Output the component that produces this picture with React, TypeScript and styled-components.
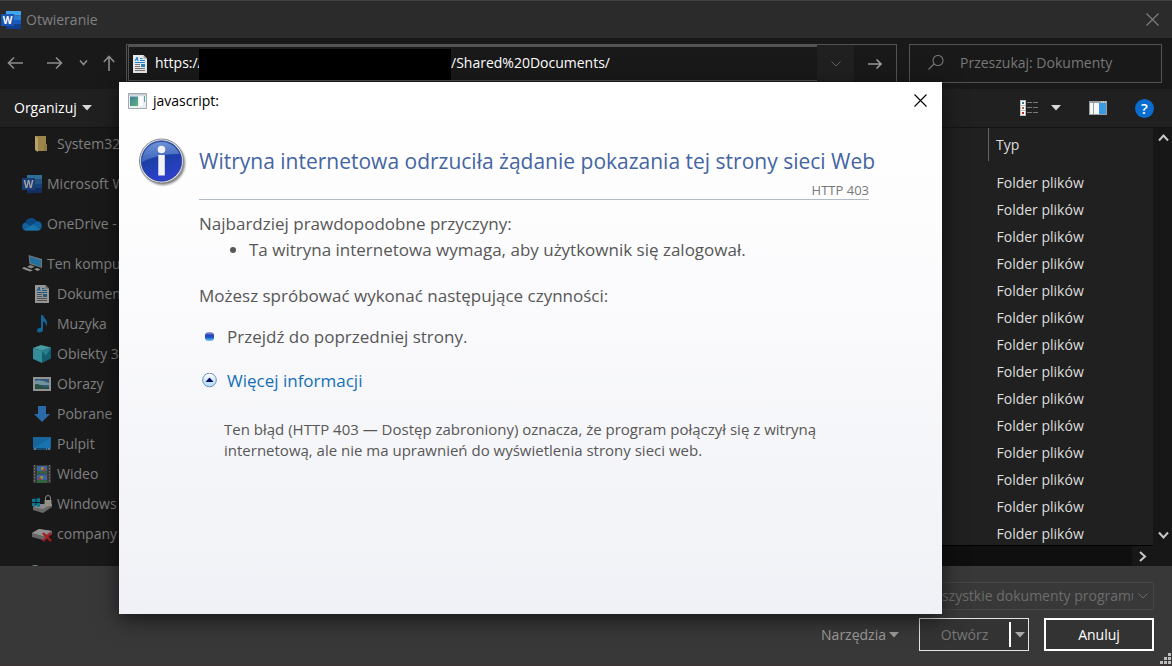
import React, { ReactNode } from 'react'
import styled, { createGlobalStyle } from 'styled-components'

const FONT = '"Segoe UI", "Open Sans", "Noto Sans", sans-serif'
const LINE = '#535353'

const GlobalStyle = createGlobalStyle`
  * {
    box-sizing: border-box;
  }

  body {
    margin: 0;
    background: #383838;
    font-family: ${FONT};
    font-size: 14px;
    line-height: 20px;
  }

  button,
  input,
  select {
    font: inherit;
    color: inherit;
    background: none;
    border: 0;
    border-radius: 0;
    padding: 0;
    margin: 0;
    outline: 0;
  }

  svg {
    display: block;
    flex: none;
  }
`

const Window = styled.div`
  position: relative;
  display: flex;
  flex-direction: column;
  height: 100vh;
  min-height: 640px;
  overflow: hidden;
  background: #191919;
  border-top: 1px solid #414141;
`

const TitleBar = styled.header`
  display: flex;
  align-items: center;
  gap: 5px;
  height: 37px;
  padding: 0 13px 0 1px;
  background: #2b2b2b;
  color: #808080;
`

const WindowTitle = styled.h1`
  flex: 1;
  margin: 0;
  font-size: 14px;
  font-weight: 400;
  line-height: 20px;
`

const IconButton = styled.button`
  display: flex;
  align-items: center;
  justify-content: center;
`

const AddressBar = styled.div`
  display: flex;
  align-items: center;
  gap: 12px;
  height: 51px;
  padding: 0 10px 0 7px;
`

const Nav = styled.nav`
  display: flex;
  align-items: center;
  gap: 15px;
  width: 109px;
  margin-right: -2px;
  padding-bottom: 2px;
  color: #8c8c8c;

  button:first-child {
    margin-right: 8px;
  }
`

const AddressBox = styled.div`
  display: flex;
  flex: 1;
  height: 39px;
  border: 1px solid ${LINE};
`

const AddressField = styled.div`
  display: flex;
  flex: 1;
  min-width: 0;
  margin: 0 0 1px 1px;
  border: 1px solid ${LINE};
  border-top-width: 2px;
  border-right: 0;
  padding-left: 4px;
  color: #fff;

  svg {
    align-self: center;
    margin-right: 8px;
  }
`

const AddressInput = styled.input<{ width?: number }>`
  width: ${props => (props.width ? `${props.width}px` : 'auto')};
  flex: ${props => (props.width ? 'none' : 1)};
  min-width: 0;
  padding-bottom: 2px;
`

const Redacted = styled.div`
  width: 252px;
  margin-top: 2px;
  background: #000;
`

const History = styled.button`
  display: flex;
  align-items: center;
  justify-content: center;
  width: 37px;
  background: #202020;
  color: #606060;
`

const GoButton = styled(IconButton)`
  width: 42px;
  color: #999;
`

const Search = styled.label`
  display: flex;
  align-items: center;
  gap: 16px;
  width: 253px;
  height: 39px;
  padding: 0 0 2px 18px;
  border: 1px solid ${LINE};
  color: #777;

  input {
    flex: 1;
    min-width: 0;
  }

  input::placeholder {
    color: #777;
    opacity: 1;
  }
`

const Toolbar = styled.div`
  display: flex;
  align-items: center;
  gap: 28px;
  height: 39px;
  padding: 0 18px 0 14px;
  background: #202020;
  border-bottom: 1px solid #141414;
  color: #fff;
`

const Organize = styled.button`
  display: flex;
  align-items: center;
  gap: 5px;
  margin-right: auto;
`

const ViewButton = styled.button`
  display: flex;
  align-items: center;
  gap: 13px;
`

const HelpButton = styled.button`
  width: 19px;
  height: 19px;
  border-radius: 50%;
  background: #0a6cce;
  color: #fff;
  font-size: 15px;
  font-weight: 600;
  line-height: 19px;
`

const Main = styled.main`
  display: flex;
  flex: 1;
  min-height: 0;
  overflow: hidden;
`

const Sidebar = styled.nav`
  width: 300px;
  padding-top: 1px;
  color: #808080;
  overflow: hidden;
`

const Section = styled.div`
  margin-bottom: 10px;
`

const Place = styled.a<{ $nested?: boolean }>`
  display: flex;
  align-items: center;
  gap: 5px;
  height: 30px;
  padding-left: ${props => (props.$nested ? 32 : 22)}px;
  color: inherit;
  text-decoration: none;
  white-space: nowrap;
`

const IconSlot = styled.span`
  display: flex;
  justify-content: center;
  width: 20px;
`

const List = styled.section`
  display: flex;
  flex: 1;
  flex-direction: column;
  background: #202020;
`

const Files = styled.div`
  flex: 1;
  min-height: 0;
  overflow: hidden;
`

const Table = styled.table`
  width: 165px;
  margin-left: auto;
  border-collapse: collapse;
  color: #dedede;

  th,
  td {
    height: 27px;
    padding: 0 0 0 8px;
    font-weight: 400;
    text-align: left;
  }

  th {
    height: 33px;
    border-left: 1px solid #636363;
    padding-left: 7px;
  }

  tbody::before {
    content: '';
    display: block;
    height: 8px;
  }
`

const HorizontalScroll = styled.div`
  display: flex;
  justify-content: flex-end;
  height: 21px;
  background: #0f0f0f;
  border-top: 1px solid #000;
`

const VerticalScroll = styled.div`
  display: flex;
  flex-direction: column;
  justify-content: space-between;
  width: 19px;
  padding-bottom: 21px;
  background: #171717;
`

const ScrollButton = styled.button`
  display: flex;
  align-items: center;
  justify-content: center;
  min-width: 21px;
  height: 20px;
  background: #171717;
  color: #c8c8c8;
`

const Footer = styled.footer`
  display: flex;
  flex-direction: column;
  align-items: flex-end;
  gap: 8px;
  height: 100px;
  padding: 16px 18px 0 0;
  background: #383838;
  border-bottom: 1px solid #3f3336;
`

const FileType = styled.label`
  display: grid;
  align-items: center;
  width: 236px;
  height: 28px;
  border: 1px solid #454545;
  color: #6c6c6c;

  select,
  svg {
    grid-area: 1 / 1;
  }

  select {
    width: 214px;
    padding-left: 10px;
    color: #6c6c6c;
    opacity: 1;
    text-overflow: clip;
    appearance: none;
  }

  svg {
    justify-self: end;
    margin-right: 5px;
  }
`

const Actions = styled.div`
  display: flex;
  align-items: center;
  gap: 15px;
`

const Tools = styled.button`
  display: flex;
  align-items: center;
  gap: 3px;
  margin-right: 5px;
  color: #9a9a9a;
`

const SplitButton = styled.div`
  display: flex;
  align-items: center;
  width: 110px;
  height: 33px;
  border: 1px solid #e4e4e4;
  background: #333;
  color: #777;

  button:first-child {
    flex: 1;
  }

  button:last-child {
    display: flex;
    align-items: center;
    justify-content: center;
    width: 19px;
    height: 25px;
    border-left: 2px solid #fff;
  }
`

const CancelButton = styled.button`
  width: 110px;
  height: 33px;
  border: 2px solid #fff;
  background: #333;
  color: #fff;
`

const Grip = styled.div`
  position: absolute;
  right: 0;
  bottom: 1px;
`

const Dialog = styled.div`
  position: absolute;
  top: 81px;
  right: 230px;
  left: 119px;
  min-height: 532px;
  background: linear-gradient(#fff, #fdfdfe 25%, #f0f1f6);
  box-shadow: 0 5px 20px rgba(0, 0, 0, 0.6);
  color: #575757;
`

const DialogBar = styled.div`
  display: flex;
  align-items: center;
  gap: 6px;
  height: 37px;
  padding: 0 15px 0 9px;
  background: #fff;
  color: #000;

  span {
    flex: 1;
  }
`

const DialogBody = styled.div`
  display: grid;
  grid-template-columns: 48px 1fr;
  column-gap: 12px;
  padding: 18px 73px 18px 20px;
`

const Message = styled.div`
  min-width: 0;
  font-size: 17px;
  line-height: 26px;

  p {
    margin: 0;
  }
`

const MessageHead = styled.div`
  border-bottom: 1px solid #b1bcc8;
  margin-bottom: 11px;
`

const Heading = styled.h2`
  margin: 0;
  padding-top: 8px;
  font-size: 21px;
  font-weight: 400;
  line-height: 32px;
  white-space: nowrap;
  color: #4465a2;
`

const Code = styled.div`
  padding-top: 4px;
  font-size: 13px;
  line-height: 18px;
  color: #787878;
  text-align: right;
`

const Causes = styled.ul`
  margin: 0 0 20px;
  padding-left: 50px;
`

const Step = styled.div`
  display: flex;
  align-items: center;
  gap: 10px;
  margin-top: 15px;
  padding-left: 3px;

  & + & {
    margin-top: 18px;
  }
`

const More = styled.a`
  color: #136fb5;
  text-decoration: none;
`

const Details = styled.p`
  && {
    margin: 25px 25px 0;
    font-size: 15px;
    line-height: 21px;
  }
`

const Caret = ({ color = '#d8d8d8' }: { color?: string }) => (
  <svg width="10" height="6" viewBox="0 0 10 6">
    <path d="M0 0h10L5 5.5z" fill={color} />
  </svg>
)

const Stroke = ({
  d,
  width,
  height,
  weight = 1.6
}: {
  d: string
  width: number
  height: number
  weight?: number
}) => (
  <svg
    width={width}
    height={height}
    viewBox={`0 0 ${width} ${height}`}
    fill="none"
    stroke="currentColor"
    strokeWidth={weight}
  >
    <path d={d} />
  </svg>
)

const Close = () => (
  <Stroke d="M.5.5l12 12M12.5.5l-12 12" width={13} height={13} weight={1.1} />
)

const WordIcon = ({ dim }: { dim?: boolean }) => (
  <svg width="20" height="18" viewBox="0 0 20 18" opacity={dim ? 0.6 : 1}>
    <path d="M5 0h15v4.5H5z" fill="#41a5ee" />
    <path d="M5 4.5h15V9H5z" fill="#2b7cd3" />
    <path d="M5 9h15v4.5H5z" fill="#185abd" />
    <path d="M5 13.5h15V18H5z" fill="#103f91" />
    <path d="M0 3h13v12H0z" fill="#1b56b5" />
    <text
      x="6.5"
      y="12.5"
      fill="#fff"
      fontSize="10"
      fontWeight="700"
      textAnchor="middle"
    >
      W
    </text>
  </svg>
)

const DocumentIcon = ({ dim }: { dim?: boolean }) => (
  <svg width="14" height="18" viewBox="0 0 14 18" opacity={dim ? 0.6 : 1}>
    <path d="M0 0h10.5L14 3.5V18H0z" fill="#e9e9e9" />
    <path d="M10.5 0v3.5H14z" fill="#9a9a9a" />
    <path d="M2 6l2.2-4L5 6M2.5 4.7h2.3" stroke="#1684d2" fill="none" />
    <path d="M7 3.5h2.5M7 5.5h5M2 7.5h10" stroke="#1684d2" />
    <path d="M2 9.5h5M2 11.5h5M2 13.5h10M2 15.5h10" stroke="#777" />
    <path d="M8 9h4v3H8z" fill="#2d83bd" />
  </svg>
)

const FolderIcon = () => (
  <svg width="20" height="18" viewBox="0 0 20 18">
    <path d="M3 1h11v15H5z" fill="#9c8548" />
    <path d="M3 1l3 2v14l-3-2z" fill="#b7a36c" />
    <path d="M12 9h3v7h-3z" fill="#8e7a45" />
  </svg>
)

const OneDriveIcon = () => (
  <svg width="20" height="14" viewBox="0 0 20 14">
    <path
      d="M4 13.5a4 4 0 01-.6-7.9 6.2 6.2 0 0111.3-1.2A4.6 4.6 0 0116 13.5z"
      fill="#12609b"
    />
    <path d="M5 3a6.2 6.2 0 019.7 1.4L8 9 3.400 5.600z" fill="#0c477f" />
    <path d="M2 12.7l9-5.200 7.5 5.200q-1 .8-2.5.8H4q-1.2 0-2-.8z" fill="#1975a9" />
  </svg>
)

const ComputerIcon = () => (
  <svg width="20" height="18" viewBox="0 0 20 18">
    <path d="M6.5 0L20 4v9L7.500 9z" fill="#777" />
    <path d="M7.5 1.5L19 5v7L8.500 8z" fill="#236f9f" />
    <path d="M8 10l4.5 1.5-3 2L5 12z" fill="#858585" />
    <path
      d="M2 12l9 3.5-3 1L0 13.5zM12 14l3-1 3.5 1.5-3 1.5z"
      fill="#909090"
    />
  </svg>
)

const MusicIcon = () => (
  <svg width="20" height="18" viewBox="0 0 20 18">
    <path
      d="M9 0h2c.5 3 4 4 4 8 0 1.5-.5 2.5-1 3.5.2-3-1-4.5-3-5v8c0 2-1.7 3-3.5 3S5 16.500 5 15.2s1.5-2.400 4-2.400z"
      fill="#116698"
    />
  </svg>
)

const CubeIcon = () => (
  <svg width="20" height="18" viewBox="0 0 20 18">
    <path d="M1 3l8-3 10 2.5L10 6z" fill="#489ba4" />
    <path d="M10 6l9-3.500v11L10 18z" fill="#155e70" />
    <path d="M1 3l9 3v12l-9-4z" fill="#348b99" />
    <path d="M10 6l9-3.500-5 8z" fill="#2a8090" />
  </svg>
)

const PictureIcon = () => (
  <svg width="20" height="16" viewBox="0 0 20 16">
    <path d="M1 1h18v14H1z" fill="#929292" />
    <path d="M3 3h14v10H3z" fill="#31597e" />
    <path d="M3 5q5-2 14 2v2H3z" fill="#71939b" />
    <path d="M3 8q5 0 7 2t7 1v2H3z" fill="#294e42" />
  </svg>
)

const DownloadIcon = () => (
  <svg width="20" height="18" viewBox="0 0 20 18">
    <path d="M6 1h8v8h4l-8 8-8-8h4z" fill="#2a6aa6" />
  </svg>
)

const DesktopIcon = () => (
  <svg width="20" height="16" viewBox="0 0 20 16">
    <path d="M1 1h18v13H1z" fill="#17659d" />
    <path d="M2 12L18 2v10z" fill="#1a73ac" />
    <path d="M1 12h18v2H1z" fill="#14486d" />
    <path d="M2 13h2M14 13h1M16 13h2" stroke="#aaa" />
  </svg>
)

const VideoIcon = () => (
  <svg width="20" height="20" viewBox="0 0 20 20">
    <path d="M1 1h18v18H1z" fill="#393939" />
    <path d="M2.5 1v18M17.5 1v18" stroke="#777" strokeDasharray="1.5 1.5" />
    <path d="M5 2h10v7.500H5zM5 10.500h10V19H5z" fill="#3b64a0" />
    <path d="M5 7h10v2.500H5zM5 16h10v3H5z" fill="#32633e" />
    <path d="M9 3h3v3H9zM8 12h3v3H8z" fill="#9b8538" />
    <path d="M11 5h3v2h-3zM6 14h3v2H6z" fill="#92414a" />
  </svg>
)

const WindowsDriveIcon = () => (
  <svg width="20" height="18" viewBox="0 0 20 18">
    <path d="M1 12l6-3h13v3l-9 6-10-3z" fill="#686868" />
    <path d="M1 12l6-3h13l-9 5z" fill="#8b8b8b" />
    <path
      d="M0 4l3.500-.5V7H0zM4.500 3.400L8 3v4H4.500zM0 8h3.500v3.500L0 11zM4.500 8H8v4l-3.500-.5z"
      fill="#087894"
    />
    <path d="M13.500 6V3a2.500 2.500 0 015 0v3" stroke="#888" fill="none" />
    <path d="M12.500 5h7v6h-7z" fill="#909087" />
  </svg>
)

const OfflineDriveIcon = () => (
  <svg width="20" height="16" viewBox="0 0 20 16">
    <path d="M0 7l7-4 13 2v3l-9 6L0 11z" fill="#656565" />
    <path d="M0 7l7-4 13 2-9 5z" fill="#919191" />
    <path d="M11 7l8 8M19 7l-8 8" stroke="#a81c26" strokeWidth="2.4" />
  </svg>
)

const NetworkIcon = () => (
  <svg width="20" height="18" viewBox="0 0 20 18">
    <circle cx="3" cy="6" r="6" fill="#708a95" />
  </svg>
)

const DetailsIcon = () => (
  <svg width="18" height="16" viewBox="0 0 18 16">
    <path d="M0 0h6v16H0z" fill="#bbb" />
    <path d="M1 1h4v4H1zM1 6h4v4H1zM1 11h4v4H1z" fill="#fff" />
    <path d="M2 2h2v2H2z" fill="#307c86" />
    <path d="M2 7h2v2H2z" fill="#a6653c" />
    <path d="M2 12h2v2H2z" fill="#c32818" />
    <path
      d="M7 2.500h5M13 2.500h5M7 7.500h5M13 7.500h5M7 12.500h5M13 12.500h5"
      stroke="#777"
    />
  </svg>
)

const PreviewIcon = () => (
  <svg width="18" height="14" viewBox="0 0 18 14">
    <path d="M0 0h18v14H0z" fill="#9a9fa3" />
    <path d="M1 2h3v11H1zM5 2h5v11H5z" fill="#f7f7f7" />
    <path d="M10 2h7v11h-7z" fill="#3c98df" />
    <path d="M12 1h1M14 1h1M16 1h1" stroke="#fff" />
  </svg>
)

const SiteIcon = () => (
  <svg width="19" height="16" viewBox="0 0 19 16">
    <defs>
      <linearGradient id="site" x1="0" y1="0" x2="1" y2="1">
        <stop stopColor="#3f7f9c" />
        <stop offset="1" stopColor="#5fb27c" />
      </linearGradient>
    </defs>
    <path d="M.5.5h18v15H.5z" fill="#eceff1" stroke="#a3a9b1" />
    <path d="M1 1h17v1.5H1z" fill="#c5cbd2" />
    <path d="M2 3.5h8V13H2z" fill="url(#site)" />
    <path d="M11.5 3.5h3V13h-3z" fill="#fff" />
    <path d="M16.500 3v6" stroke="#5aa493" />
  </svg>
)

const InfoIcon = () => (
  <svg width="48" height="50" viewBox="0 0 48 50">
    <defs>
      <linearGradient id="ball" x1="0" y1="0" x2=".3" y2="1">
        <stop stopColor="#3768bd" />
        <stop offset=".5" stopColor="#1b3fa5" />
        <stop offset="1" stopColor="#2c40ca" />
      </linearGradient>
      <linearGradient id="gloss" x1="0" y1="0" x2="0" y2="1">
        <stop stopColor="#7fa0dd" stopOpacity=".8" />
        <stop offset="1" stopColor="#5f86d2" stopOpacity=".5" />
      </linearGradient>
      <filter id="soft" x="-20%" y="-20%" width="140%" height="140%">
        <feGaussianBlur stdDeviation="1.2" />
      </filter>
    </defs>
    <circle cx="24" cy="26" r="22" opacity=".5" filter="url(#soft)" />
    <circle cx="22.5" cy="24" r="22" fill="#e9ebef" stroke="#85888f" />
    <circle
      cx="22.5"
      cy="24"
      r="20.3"
      fill="url(#ball)"
      stroke="#1b2f80"
      strokeWidth=".6"
    />
    <path
      d="M3 25A19.500 19.500 0 0140.500 17Q21 16 3 25z"
      fill="url(#gloss)"
    />
    <circle cx="22.5" cy="12.500" r="3.800" fill="#f3f3f6" />
    <path d="M19.300 18h6.500v20.500h-6.500z" fill="#f3f3f6" />
  </svg>
)

const BulletIcon = () => (
  <svg width="15" height="15" viewBox="0 0 15 15">
    <defs>
      <linearGradient id="bullet" x1="0" y1="0" x2="0" y2="1">
        <stop stopColor="#a9b4dc" />
        <stop offset=".35" stopColor="#2a3fb8" />
        <stop offset=".6" stopColor="#1b56c9" />
        <stop offset="1" stopColor="#6fd3f2" />
      </linearGradient>
    </defs>
    <rect x="3" y="2" width="9" height="9" rx="3.5" fill="url(#bullet)" />
  </svg>
)

const CollapseIcon = () => (
  <svg width="15" height="16" viewBox="0 0 15 16">
    <defs>
      <linearGradient id="collapse" x1="0" y1="0" x2="0" y2="1">
        <stop stopColor="#fff" />
        <stop offset="1" stopColor="#abdcf3" />
      </linearGradient>
    </defs>
    <circle cx="7.5" cy="7" r="6.8" fill="url(#collapse)" stroke="#7189bf" />
    <path d="M3.500 9l4-4.500 4 4.500z" fill="#0a0a64" />
  </svg>
)

const GripIcon = () => (
  <svg width="12" height="12" viewBox="0 0 12 12">
    <path
      d="M8 0h3v3H8zM4 4h3v3H4zM8 4h3v3H8zM0 8h3v3H0zM4 8h3v3H4zM8 8h3v3H8z"
      fill="#bdbdbd"
    />
  </svg>
)

const places: { name: string; icon: ReactNode }[] = [
  { name: 'Dokumenty', icon: <DocumentIcon dim /> },
  { name: 'Muzyka', icon: <MusicIcon /> },
  { name: 'Obiekty 3D', icon: <CubeIcon /> },
  { name: 'Obrazy', icon: <PictureIcon /> },
  { name: 'Pobrane', icon: <DownloadIcon /> },
  { name: 'Pulpit', icon: <DesktopIcon /> },
  { name: 'Wideo', icon: <VideoIcon /> },
  { name: 'Windows', icon: <WindowsDriveIcon /> },
  { name: 'company', icon: <OfflineDriveIcon /> }
]

const files = Array.from({ length: 14 }, () => 'Folder plików')

const placeLink = (name: string, icon: ReactNode, nested = false) => (
  <Place key={name} href="#" $nested={nested}>
    <IconSlot>{icon}</IconSlot>
    {name}
  </Place>
)

const App = () => (
  <Window>
    <GlobalStyle />
    <TitleBar>
      <WordIcon />
      <WindowTitle>Otwieranie</WindowTitle>
      <IconButton aria-label="Zamknij">
        <Close />
      </IconButton>
    </TitleBar>

    <AddressBar>
      <Nav>
        <IconButton aria-label="Wstecz">
          <Stroke d="M16 7H2M7 1.5L1.5 7 7 12.5" width={17} height={14} />
        </IconButton>
        <IconButton aria-label="Dalej">
          <Stroke d="M0 7h14M9 1.5L14.5 7 9 12.5" width={17} height={14} />
        </IconButton>
        <IconButton aria-label="Ostatnie lokalizacje">
          <Stroke d="M1 1.5l3.5 4L8 1.5" width={9} height={7} />
        </IconButton>
        <IconButton aria-label="W górę">
          <Stroke d="M6 16V2M.8 7L6 1.5 11.2 7" width={12} height={16} />
        </IconButton>
      </Nav>
      <AddressBox>
        <AddressField>
          <DocumentIcon />
          <AddressInput
            aria-label="Protokół"
            width={44}
            defaultValue="https://"
          />
          <Redacted />
          <AddressInput
            aria-label="Adres"
            defaultValue="/Shared%20Documents/"
          />
        </AddressField>
        <History aria-label="Poprzednie lokalizacje">
          <Stroke
            d="M.5.5L5 5 9.5.5"
            width={10}
            height={6}
            weight={1}
          />
        </History>
        <GoButton aria-label="Przejdź">
          <Stroke
            d="M0 6h13M8.5 1.5L13 6l-4.5 4.5"
            width={14}
            height={12}
          />
        </GoButton>
      </AddressBox>
      <Search>
        <Stroke
          d="M.5 14.5l6-6M15 5.5a5 5 0 11-10 0 5 5 0 0110 0z"
          width={16}
          height={15}
          weight={1.1}
        />
        <input aria-label="Szukaj" placeholder="Przeszukaj: Dokumenty" />
      </Search>
    </AddressBar>

    <Toolbar>
      <Organize>
        Organizuj
        <Caret />
      </Organize>
      <ViewButton aria-label="Zmień widok">
        <DetailsIcon />
        <Caret />
      </ViewButton>
      <IconButton aria-label="Okienko podglądu">
        <PreviewIcon />
      </IconButton>
      <HelpButton>?</HelpButton>
    </Toolbar>

    <Main>
      <Sidebar>
        <Section>{placeLink('System32', <FolderIcon />, true)}</Section>
        <Section>{placeLink('Microsoft Word', <WordIcon dim />)}</Section>
        <Section>{placeLink('OneDrive - Personal', <OneDriveIcon />)}</Section>
        <Section>
          {placeLink('Ten komputer', <ComputerIcon />)}
          {places.map(place => placeLink(place.name, place.icon, true))}
        </Section>
        <Place href="#" aria-label="Sieć" $nested>
          <NetworkIcon />
        </Place>
      </Sidebar>
      <List>
        <Files>
          <Table>
            <thead>
              <tr>
                <th>Typ</th>
              </tr>
            </thead>
            <tbody>
              {files.map((type, index) => (
                <tr key={index}>
                  <td>{type}</td>
                </tr>
              ))}
            </tbody>
          </Table>
        </Files>
        <HorizontalScroll>
          <ScrollButton aria-label="W prawo">
            <Stroke d="M1 1l5 4.5L1 10" width={8} height={11} weight={2} />
          </ScrollButton>
        </HorizontalScroll>
      </List>
      <VerticalScroll>
        <ScrollButton aria-label="Przewiń w górę">
          <Stroke d="M1 6.5l4.5-5 4.5 5" width={11} height={8} weight={2} />
        </ScrollButton>
        <ScrollButton aria-label="Przewiń w dół">
          <Stroke d="M1 1.5l4.5 5 4.5-5" width={11} height={8} weight={2} />
        </ScrollButton>
      </VerticalScroll>
    </Main>

    <Footer>
      <FileType>
        <select aria-label="Typ pliku" disabled>
          <option>Wszystkie dokumenty programu Word</option>
        </select>
        <Stroke d="M.5.5L5 5 9.5.5" width={10} height={6} weight={1} />
      </FileType>
      <Actions>
        <Tools>
          Narzędzia
          <Caret color="#9a9a9a" />
        </Tools>
        <SplitButton>
          <button disabled>Otwórz</button>
          <button aria-label="Opcje otwierania">
            <Caret color="#a8a8a8" />
          </button>
        </SplitButton>
        <CancelButton>Anuluj</CancelButton>
      </Actions>
    </Footer>
    <Grip>
      <GripIcon />
    </Grip>

    <Dialog role="dialog" aria-label="javascript:">
      <DialogBar>
        <SiteIcon />
        <span>javascript:</span>
        <IconButton aria-label="Zamknij">
          <Close />
        </IconButton>
      </DialogBar>
      <DialogBody>
        <InfoIcon />
        <Message>
          <MessageHead>
            <Heading>
              Witryna internetowa odrzuciła żądanie pokazania tej strony sieci
              Web
            </Heading>
            <Code>HTTP 403</Code>
          </MessageHead>
          <p>Najbardziej prawdopodobne przyczyny:</p>
          <Causes>
            <li>Ta witryna internetowa wymaga, aby użytkownik się zalogował.</li>
          </Causes>
          <p>Możesz spróbować wykonać następujące czynności:</p>
          <Step>
            <BulletIcon />
            Przejdź do poprzedniej strony.
          </Step>
          <Step>
            <CollapseIcon />
            <More href="#">Więcej informacji</More>
          </Step>
          <Details>
            Ten błąd (HTTP 403 — Dostęp zabroniony) oznacza, że program połączył
            się z witryną internetową, ale nie ma uprawnień do wyświetlenia
            strony sieci web.
          </Details>
        </Message>
      </DialogBody>
    </Dialog>
  </Window>
)

export default App
